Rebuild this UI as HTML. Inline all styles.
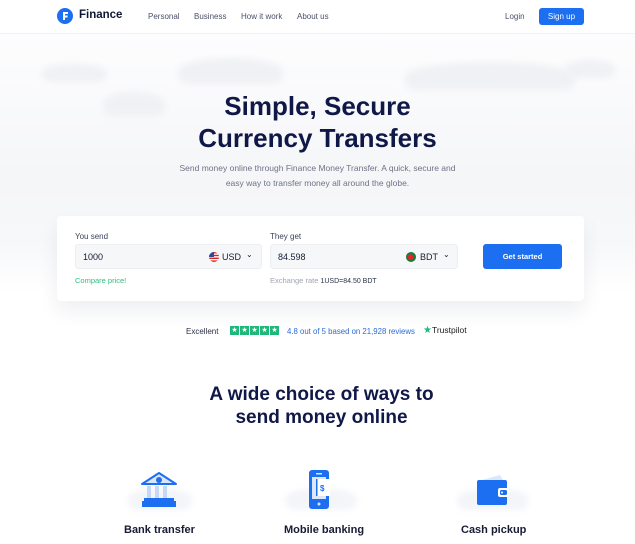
<!DOCTYPE html>
<html><head><meta charset="utf-8"><style>
*{box-sizing:border-box;margin:0;padding:0}
body{width:635px;height:544px;overflow:hidden;font-family:"Liberation Sans",sans-serif;background:#fff;position:relative;color:#0d1640}
.hero{position:absolute;left:0;top:34px;width:635px;height:260px;background:linear-gradient(#fdfdfe,#f5f6f8 55%,#f7f8fa 80%,#fff)}
.cloud{position:absolute;background:#f0f1f4;border-radius:50% 50% 10px 10px;filter:blur(3px)}
.nav{position:absolute;left:0;top:0;width:635px;height:34px;background:#fff;border-bottom:1px solid #f1f2f4}
.abs{position:absolute}
.navl{font-size:8px;color:#4a5068;top:12px}
h1{position:absolute;top:90px;width:635px;text-align:center;font-size:26px;line-height:32px;font-weight:bold;color:#0f1847}
.sub{position:absolute;top:161px;width:635px;text-align:center;font-size:8.5px;line-height:15px;color:#6d7287}
.card{position:absolute;left:57px;top:216px;width:527px;height:85px;background:#fff;border-radius:4px;box-shadow:0 10px 20px rgba(20,30,60,.07)}
.lbl{font-size:8px;color:#3c4258}
.inp{position:absolute;height:25px;background:#f6f7f9;border:1px solid #eceef1;border-radius:3px;font-size:9px;color:#161c33}
.btn{background:#1c6ff0;color:#fff;font-weight:bold;border-radius:3px;text-align:center}
h2{position:absolute;top:383px;width:643px;text-align:center;font-size:19px;line-height:23px;font-weight:bold;color:#0f1847}
.feat{position:absolute;top:524px;font-size:11px;font-weight:bold;color:#161c33}
</style></head><body>
<div class="hero">
<div class="cloud" style="left:42px;top:30px;width:65px;height:18px"></div>
<div class="cloud" style="left:178px;top:24px;width:105px;height:26px"></div>
<div class="cloud" style="left:103px;top:58px;width:62px;height:24px"></div>
<div class="cloud" style="left:405px;top:28px;width:170px;height:28px"></div>
<div class="cloud" style="left:565px;top:26px;width:50px;height:18px"></div>
</div>
<div class="nav">
<svg class="abs" style="left:57px;top:8px" width="16" height="16" viewBox="0 0 16 16"><circle cx="8" cy="8" r="8" fill="#1c6ff0"/><path d="M6 4h5v2H8v1.5h2.5v2H8V12H6z" fill="#fff"/></svg>
<div class="abs" style="left:79px;top:9px;font-size:11.5px;font-weight:bold;color:#101736">Finance</div>
<div class="abs navl" style="left:148px">Personal</div>
<div class="abs navl" style="left:194px">Business</div>
<div class="abs navl" style="left:241px">How it work</div>
<div class="abs navl" style="left:297px">About us</div>
<div class="abs navl" style="left:505px">Login</div>
<div class="abs btn" style="left:539px;top:8px;width:45px;height:17px;font-size:8px;line-height:17px;font-weight:normal">Sign up</div>
</div>
<h1>Simple, Secure<br>Currency Transfers</h1>
<div class="sub">Send money online through Finance Money Transfer. A quick, secure and<br>easy way to transfer money all around the globe.</div>
<div class="card">
<div class="abs lbl" style="left:18px;top:16px">You send</div>
<div class="inp" style="left:18px;top:28px;width:187px"><span class="abs" style="left:7px;top:7px">1000</span>
<svg class="abs" style="left:133px;top:7px" width="10" height="10" viewBox="0 0 10 10"><clipPath id="c"><circle cx="5" cy="5" r="5"/></clipPath><g clip-path="url(#c)"><rect width="10" height="10" fill="#fff"/><rect y="0" width="10" height="1.4" fill="#d22"/><rect y="2.8" width="10" height="1.4" fill="#d22"/><rect y="5.6" width="10" height="1.4" fill="#d22"/><rect y="8.4" width="10" height="1.6" fill="#d22"/><rect width="5" height="5" fill="#2a4a9a"/></g></svg>
<span class="abs" style="left:146px;top:7px">USD</span><span class="abs" style="left:170px;top:5px;font-size:8px">⌄</span></div>
<div class="abs" style="left:18px;top:60px;font-size:7.5px;color:#2ebf7f">Compare price!</div>
<div class="abs lbl" style="left:213px;top:16px">They get</div>
<div class="inp" style="left:213px;top:28px;width:188px"><span class="abs" style="left:7px;top:7px">84.598</span>
<svg class="abs" style="left:135px;top:7px" width="10" height="10"><circle cx="5" cy="5" r="5" fill="#1a7a3e"/><circle cx="4.5" cy="5" r="2.8" fill="#e22"/></svg>
<span class="abs" style="left:149px;top:7px">BDT</span><span class="abs" style="left:172px;top:5px;font-size:8px">⌄</span></div>
<div class="abs" style="left:213px;top:60px;font-size:7.5px;color:#a0a4b2">Exchange rate <span style="font-size:7px;color:#2a3046">1USD=84.50 BDT</span></div>
<div class="abs btn" style="left:426px;top:28px;width:79px;height:25px;font-size:7.5px;line-height:25px">Get started</div>
</div>
<div class="abs" style="left:186px;top:327px;font-size:8px;color:#2a3046">Excellent</div>
<div class="abs" style="left:230px;top:326px;display:flex;gap:1px">
<span style="width:9px;height:9px;background:#1fb87a;color:#fff;font-size:7px;line-height:9px;text-align:center">★</span><span style="width:9px;height:9px;background:#1fb87a;color:#fff;font-size:7px;line-height:9px;text-align:center">★</span><span style="width:9px;height:9px;background:#1fb87a;color:#fff;font-size:7px;line-height:9px;text-align:center">★</span><span style="width:9px;height:9px;background:#1fb87a;color:#fff;font-size:7px;line-height:9px;text-align:center">★</span><span style="width:9px;height:9px;background:#1fb87a;color:#fff;font-size:7px;line-height:9px;text-align:center">★</span></div>
<div class="abs" style="left:287px;top:327px;font-size:7.8px;color:#2c6bd4">4.8 out of 5 based on 21,928 reviews</div>
<div class="abs" style="left:423px;top:325px;font-size:8.5px;color:#1a1a1a"><span style="color:#1fb87a;font-size:10px">★</span>Trustpilot</div>
<h2>A wide choice of ways to<br>send money online</h2>
<div class="cloud" style="left:128px;top:488px;width:64px;height:22px;background:#f3f5f8"></div>
<svg class="abs" style="left:138px;top:470px" width="42" height="40" viewBox="0 0 42 40"><path d="M4 14 L21 3 L38 14 Z" fill="#d9e5fb" stroke="#1c6ff0" stroke-width="2" stroke-linejoin="round"/><circle cx="21" cy="10" r="3" fill="#1c6ff0"/><rect x="9" y="16" width="4" height="14" fill="#c6d7f7"/><rect x="17" y="16" width="4" height="14" fill="#c6d7f7"/><rect x="25" y="16" width="4" height="14" fill="#c6d7f7"/><rect x="6" y="28" width="30" height="3" fill="#1c6ff0"/><rect x="4" y="31" width="34" height="6" fill="#1c6ff0"/></svg>
<div class="cloud" style="left:285px;top:488px;width:72px;height:22px;background:#f3f5f8"></div>
<svg class="abs" style="left:305px;top:469px" width="30" height="42" viewBox="0 0 30 42"><rect x="4" y="1" width="20" height="39" rx="3" fill="#1c6ff0"/><rect x="7" y="8" width="14" height="22" fill="#dce7fb"/><rect x="12" y="10" width="13" height="17" fill="#fff"/><rect x="11" y="10" width="1.5" height="17" fill="#1c6ff0"/><text x="15" y="22" font-size="8" font-family="Liberation Sans" fill="#1c6ff0" font-weight="bold">$</text><circle cx="14" cy="35" r="1.5" fill="#dce7fb"/><rect x="11" y="4" width="6" height="1.5" fill="#dce7fb"/></svg>
<div class="cloud" style="left:457px;top:488px;width:72px;height:22px;background:#f3f5f8"></div>
<svg class="abs" style="left:474px;top:472px" width="38" height="36" viewBox="0 0 38 36"><path d="M8 8 L26 3 L29 8" fill="#dce7fb"/><rect x="3" y="8" width="30" height="25" rx="2" fill="#1c6ff0"/><rect x="24" y="16" width="11" height="9" rx="2" fill="#fff"/><rect x="26" y="18" width="7" height="5" rx="1.5" fill="#1c6ff0"/><circle cx="28" cy="20.5" r="1" fill="#fff"/></svg>
<div class="feat" style="left:124px">Bank transfer</div>
<div class="feat" style="left:284px">Mobile banking</div>
<div class="feat" style="left:461px">Cash pickup</div>
</body></html>
